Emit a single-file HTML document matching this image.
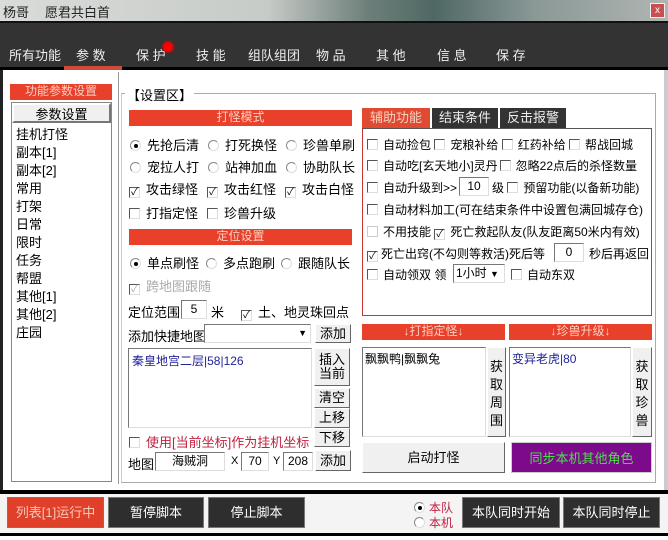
<!DOCTYPE html>
<html><head><meta charset="utf-8"><style>
*{box-sizing:border-box;margin:0;padding:0}
body{width:668px;height:540px;overflow:hidden;background:#fff;font-family:"Liberation Sans","Noto Sans CJK SC","WenQuanYi Zen Hei",sans-serif;font-size:13px;color:#000;position:relative}
.a{position:absolute;white-space:nowrap}
.red{background:#e8402a;color:#fbd0c0;text-align:center;font-size:12px;line-height:15px}
.cb{display:inline-block;width:11px;height:11px;border:1px solid #555;border-right-color:#ddd;border-bottom-color:#ddd;background:#fff;vertical-align:-1px;margin-right:6px;font-size:10px;line-height:9px;text-align:center}
.rd{display:inline-block;width:11px;height:11px;border-radius:50%;border:1px solid #888;border-right-color:#ddd;border-bottom-color:#ddd;background:#fff;vertical-align:-1px;margin-right:6px;position:relative}
.rd.on:after{content:"";position:absolute;left:3px;top:3px;width:4px;height:4px;border-radius:50%;background:#000}
.btn{background:#f0f0f0;border:1px solid #fff;border-right-color:#666;border-bottom-color:#666;text-align:center}
.dbtn{background:#2e2e2e;color:#fff;text-align:center;border:1px solid #777;line-height:29px;font-size:13px}
.inp{background:#fff;border:1px solid #777;border-right-color:#ddd;border-bottom-color:#ddd;text-align:center;font-size:12px}
.rp{font-size:12px}
.rp .cb{margin-right:5px}
</style></head><body>
<div class="a" style="left:0;top:0;width:668px;height:22px;background:linear-gradient(90deg,#d9dcd9 0,#c7cbc8 40%,#6e7f7a 55%,#4f6864 65%,#8a9896 80%,#b0b5b3 100%)"></div>
<div class="a" style="left:3px;top:2px;font-size:13px;color:#222">杨哥</div>
<div class="a" style="left:45px;top:2px;font-size:13px;color:#222">愿君共白首</div>
<div class="a" style="left:650px;top:3px;width:15px;height:15px;background:#c95050;border:1px solid #eee;color:#fff;font-size:10px;text-align:center;line-height:13px">x</div>
<div class="a" style="left:0;top:21px;width:668px;height:47px;background:#333;border-top:2px solid #111"></div>
<div class="a" style="left:0;top:67px;width:668px;height:3px;background:#000"></div>
<div class="a" style="left:0;top:45px;color:#eee;font-size:13px">
<span class="a" style="left:9px">所有功能</span><span class="a" style="left:76px">参 数</span><span class="a" style="left:136px">保 护</span><span class="a" style="left:196px">技 能</span><span class="a" style="left:248px">组队组团</span><span class="a" style="left:316px">物 品</span><span class="a" style="left:376px">其 他</span><span class="a" style="left:437px">信 息</span><span class="a" style="left:496px">保 存</span></div>
<div class="a" style="left:163px;top:42px;width:10px;height:10px;border-radius:50%;background:#f00;box-shadow:0 0 3px #f00"></div>
<div class="a" style="left:64px;top:66px;width:58px;height:4px;background:#d04a3a"></div>
<div class="a" style="left:0;top:70px;width:3px;height:420px;background:#222"></div>
<div class="a" style="left:664px;top:70px;width:4px;height:420px;background:#ccc"></div>

<div class="a red" style="left:10px;top:84px;width:102px;height:16px">功能参数设置</div>
<div class="a" style="left:11px;top:102px;width:101px;height:380px;border:1px solid #888;background:#fff"></div>
<div class="a btn" style="left:12px;top:103px;width:99px;height:20px;line-height:19px;border:2px solid #fff;border-right-color:#777;border-bottom-color:#777">参数设置</div>
<div class="a" style="left:16px;top:126px;line-height:18px;font-size:13px">挂机打怪<br>副本[1]<br>副本[2]<br>常用<br>打架<br>日常<br>限时<br>任务<br>帮盟<br>其他[1]<br>其他[2]<br>庄园</div>
<div class="a" style="left:118px;top:72px;width:1px;height:412px;background:#999"></div>

<div class="a" style="left:121px;top:93px;width:535px;height:390px;border:1px solid #aaa;border-left-color:#ccc"></div>
<div class="a" style="left:125px;top:85px;background:#fff;padding:0 2px;font-size:13px">【设置区】</div>

<div class="a red" style="left:129px;top:110px;width:223px;height:16px">打怪模式</div>
<div class="a" style="left:130px;top:135px"><span class="rd on"></span>先抢后清</div>
<div class="a" style="left:208px;top:135px"><span class="rd"></span>打死换怪</div>
<div class="a" style="left:286px;top:135px"><span class="rd"></span>珍兽单刷</div>
<div class="a" style="left:130px;top:157px"><span class="rd"></span>宠拉人打</div>
<div class="a" style="left:208px;top:157px"><span class="rd"></span>站神加血</div>
<div class="a" style="left:286px;top:157px"><span class="rd"></span>协助队长</div>
<div class="a" style="left:129px;top:179px"><span class="cb">✓</span>攻击绿怪</div>
<div class="a" style="left:207px;top:179px"><span class="cb">✓</span>攻击红怪</div>
<div class="a" style="left:285px;top:179px"><span class="cb">✓</span>攻击白怪</div>
<div class="a" style="left:129px;top:203px"><span class="cb"></span>打指定怪</div>
<div class="a" style="left:207px;top:203px"><span class="cb"></span>珍兽升级</div>

<div class="a red" style="left:129px;top:229px;width:223px;height:16px">定位设置</div>
<div class="a" style="left:130px;top:253px"><span class="rd on"></span>单点刷怪</div>
<div class="a" style="left:206px;top:253px"><span class="rd"></span>多点跑刷</div>
<div class="a" style="left:281px;top:253px"><span class="rd"></span>跟随队长</div>
<div class="a" style="left:129px;top:276px;color:#aaa"><span class="cb" style="color:#aaa">✓</span>跨地图跟随</div>
<div class="a" style="left:128px;top:302px">定位范围</div>
<div class="a inp" style="left:181px;top:300px;width:26px;height:19px;line-height:17px">5</div>
<div class="a" style="left:211px;top:302px">米</div>
<div class="a" style="left:241px;top:302px"><span class="cb">✓</span>土、地灵珠回点</div>
<div class="a" style="left:128px;top:326px">添加快捷地图</div>
<div class="a inp" style="left:204px;top:324px;width:107px;height:19px;text-align:right;font-size:9px;line-height:17px;padding-right:3px">▼</div>
<div class="a btn" style="left:315px;top:324px;width:36px;height:19px;line-height:17px">添加</div>
<div class="a inp" style="left:128px;top:348px;width:184px;height:80px;text-align:left;padding:3px;color:#229;font-size:12px">秦皇地宫二层|58|126</div>
<div class="a btn" style="left:314px;top:348px;width:36px;height:38px;line-height:14px;padding-top:4px">插入<br>当前</div>
<div class="a btn" style="left:314px;top:388px;width:36px;height:20px;line-height:18px">清空</div>
<div class="a btn" style="left:314px;top:408px;width:36px;height:20px;line-height:18px">上移</div>
<div class="a btn" style="left:314px;top:428px;width:36px;height:19px;line-height:17px">下移</div>
<div class="a" style="left:129px;top:432px;color:#c02040"><span class="cb"></span>使用[当前坐标]作为挂机坐标</div>
<div class="a" style="left:128px;top:454px">地图</div>
<div class="a inp" style="left:155px;top:452px;width:70px;height:19px;line-height:17px">海贼洞</div>
<div class="a" style="left:231px;top:455px;font-size:11px">X</div>
<div class="a inp" style="left:241px;top:452px;width:28px;height:19px;line-height:17px">70</div>
<div class="a" style="left:273px;top:455px;font-size:11px">Y</div>
<div class="a inp" style="left:283px;top:452px;width:30px;height:19px;line-height:17px">208</div>
<div class="a btn" style="left:315px;top:450px;width:36px;height:21px;line-height:19px">添加</div>

<div class="a" style="left:362px;top:108px;width:68px;height:20px;background:#e04a30;color:#f6d0c0;text-align:center;line-height:20px">辅助功能</div>
<div class="a" style="left:432px;top:108px;width:66px;height:20px;background:#333;color:#eee;text-align:center;line-height:20px">结束条件</div>
<div class="a" style="left:500px;top:108px;width:66px;height:20px;background:#333;color:#eee;text-align:center;line-height:20px">反击报警</div>
<div class="a" style="left:362px;top:128px;width:290px;height:188px;border:1px solid #c33;border-top-color:#555"></div>
<div class="rp">
<div class="a" style="left:367px;top:136px"><span class="cb"></span>自动捡包 <span class="cb"></span>宠粮补给 <span class="cb"></span>红药补给 <span class="cb"></span>帮战回城</div>
<div class="a" style="left:367px;top:157px"><span class="cb"></span>自动吃[玄天地小]灵丹<span class="cb" style="margin-left:2px"></span>忽略22点后的杀怪数量</div>
<div class="a" style="left:367px;top:179px"><span class="cb"></span>自动升级到&gt;&gt;</div>
<div class="a inp" style="left:459px;top:177px;width:30px;height:19px;line-height:17px">10</div>
<div class="a" style="left:492px;top:179px">级 <span class="cb"></span>预留功能(以备新功能)</div>
<div class="a" style="left:367px;top:201px"><span class="cb"></span>自动材料加工(可在结束条件中设置包满回城存仓)</div>
<div class="a" style="left:367px;top:223px"><span class="cb" style="border-color:#ccc"></span>不用技能 <span class="cb">✓</span>死亡救起队友(队友距离50米内有效)</div>
<div class="a" style="left:367px;top:245px"><span class="cb" style="margin-right:3px">✓</span>死亡出窍(不勾则等救活)死后等</div>
<div class="a inp" style="left:554px;top:243px;width:30px;height:19px;line-height:17px">0</div>
<div class="a" style="left:589px;top:245px">秒后再返回</div>
<div class="a" style="left:367px;top:266px"><span class="cb"></span>自动领双 领</div>
<div class="a inp" style="left:453px;top:264px;width:52px;height:19px;line-height:17px;text-align:left;padding-left:2px">1小时 <span style="font-size:9px">▼</span></div>
<div class="a" style="left:511px;top:266px"><span class="cb"></span>自动东双</div>
</div>

<div class="a red" style="left:362px;top:324px;width:143px;height:16px">↓打指定怪↓</div>
<div class="a red" style="left:509px;top:324px;width:143px;height:16px">↓珍兽升级↓</div>
<div class="a inp" style="left:362px;top:347px;width:124px;height:90px;text-align:left;padding:2px;font-size:12px">飘飘鸭|飘飘兔</div>
<div class="a btn" style="left:487px;top:347px;width:19px;height:90px;line-height:18px;padding-top:10px">获<br>取<br>周<br>围</div>
<div class="a inp" style="left:509px;top:347px;width:122px;height:90px;text-align:left;padding:2px;font-size:12px;color:#229">变异老虎|80</div>
<div class="a btn" style="left:632px;top:347px;width:20px;height:90px;line-height:18px;padding-top:10px">获<br>取<br>珍<br>兽</div>
<div class="a btn" style="left:362px;top:442px;width:143px;height:31px;line-height:29px">启动打怪</div>
<div class="a" style="left:511px;top:442px;width:141px;height:31px;background:#7c0a8a;color:#4be04b;text-align:center;line-height:31px;border:1px solid #ccc">同步本机其他角色</div>

<div class="a" style="left:0;top:490px;width:668px;height:4px;background:#000"></div>
<div class="a" style="left:0;top:494px;width:668px;height:40px;background:#f4f4f4"></div>
<div class="a" style="left:0;top:533px;width:668px;height:3px;background:#000"></div>
<div class="a dbtn" style="left:7px;top:497px;width:97px;height:31px;background:#e0402a;color:#f6c8b8">列表[1]运行中</div>
<div class="a dbtn" style="left:108px;top:497px;width:96px;height:31px">暂停脚本</div>
<div class="a dbtn" style="left:208px;top:497px;width:97px;height:31px">停止脚本</div>
<div class="a" style="left:414px;top:499px;color:#c02040;font-size:12px"><span class="rd on" style="margin-right:4px"></span>本队</div>
<div class="a" style="left:414px;top:514px;color:#c02040;font-size:12px"><span class="rd" style="margin-right:4px"></span>本机</div>
<div class="a dbtn" style="left:462px;top:497px;width:98px;height:31px">本队同时开始</div>
<div class="a dbtn" style="left:563px;top:497px;width:97px;height:31px">本队同时停止</div>
</body></html>
